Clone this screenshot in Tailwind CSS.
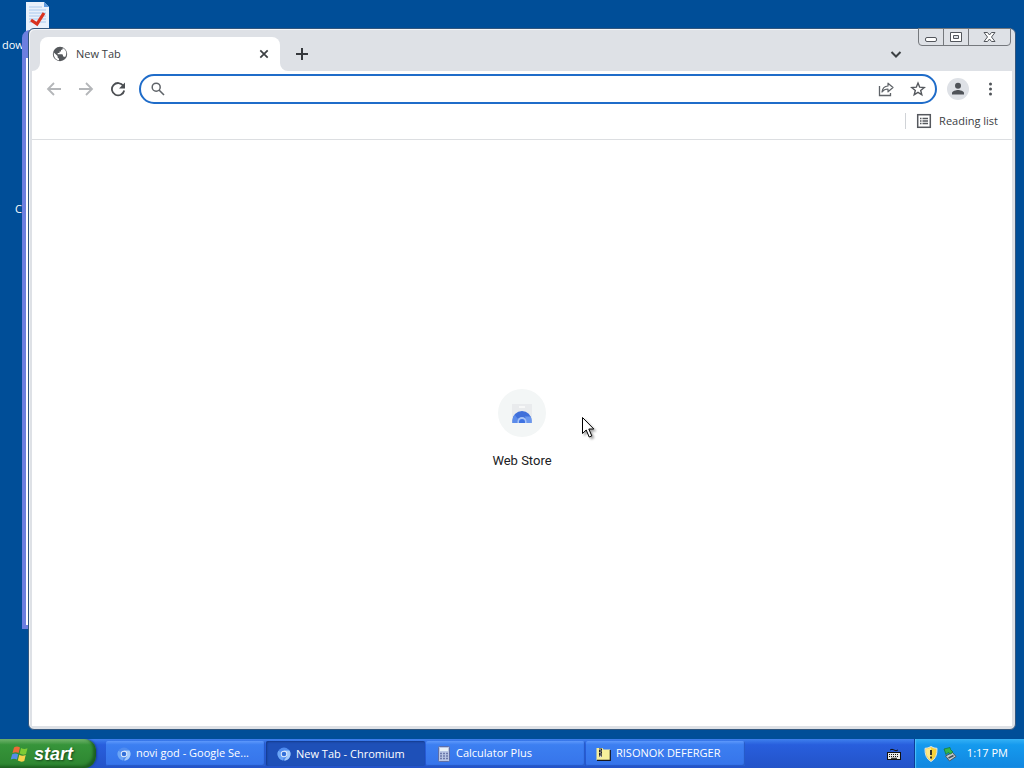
<!DOCTYPE html>
<html lang="en">
<head>
  <meta charset="UTF-8" />
  <meta name="viewport" content="width=device-width, initial-scale=1.0" />
  <title>New Tab - Chromium</title>
  <script src="https://cdn.jsdelivr.net/npm/@tailwindcss/browser@4"></script>
</head>
<body class="h-screen flex flex-col overflow-hidden bg-[#004e98] font-['Open_Sans',sans-serif] text-[11px] text-[#3c4043]">

  <!-- Desktop -->
  <main class="relative flex-1 overflow-hidden">
    <!-- Desktop icons -->
    <div class="absolute left-[2px] top-0 text-white">
      <svg class="ml-6 w-6 h-8" viewBox="0 0 24 32">
        <path d="M0 2h18l5 5v25H0z" fill="#e9f1fb" />
        <path d="M18 2v5h5z" fill="#5f9be0" />
        <path d="M3 7h13M3 10h17M3 13h17M3 16h17M3 19h17M3 22h17" stroke="#a9c9ee" />
        <path d="M5 20l6 4 7-11" fill="none" stroke="#d9321f" stroke-width="3.2" />
      </svg>
      <p class="mt-[5px] leading-4">downloads</p>
    </div>
    <p class="absolute left-[15px] top-[201px] leading-4 text-white">Chromium</p>

    <!-- Window behind -->
    <section class="absolute left-[22px] top-[30px] right-6 bottom-[110px] rounded-t-lg border-4 border-[#6c7fe0] bg-white">
      <div class="h-6 bg-[#6c7fe0]"></div>
    </section>

    <!-- Browser window -->
    <section class="absolute left-[28px] top-[28px] right-[8px] bottom-[9px] flex flex-col rounded-md border border-[#33567d] bg-[#dee1e6] shadow-[inset_1px_1px_0_#f4f5f7]">
      <!-- Tab strip -->
      <header class="relative h-[42px] pl-[11px] flex items-end">
        <div class="relative w-60 h-[34px] pl-3 pr-2 flex items-center rounded-t-lg bg-white">
          <svg class="w-4 h-4" viewBox="0 0 16 16">
            <circle cx="8" cy="8" r="7.2" fill="#55585c" />
            <path d="M1.8 6.4l3.8 3.7v1.3l1.4 1.3v1.5C3.6 13.7 1.5 11 1.8 6.4z" fill="#fff" />
            <path d="M10.6 2c.5 1.3-.3 2-1.6 2v1.5H7.5V7H5.7v1.300H10c.8 0 1 .7 1 2.200h.9c.5 0 .9.300 1.100.8C15.300 8 14.500 3.800 10.600 2z" fill="#fff" />
          </svg>
          <span class="ml-2 flex-1">New Tab</span>
          <button aria-label="Close tab" class="w-4 h-4 flex items-center justify-center">
            <svg class="w-4 h-4" viewBox="0 0 16 16"><path d="M4.300 4.300l7.400 7.400M11.700 4.300l-7.400 7.400" stroke="#3c4043" stroke-width="1.700" /></svg>
          </button>
          <svg class="absolute -left-2 bottom-0 w-2 h-2" viewBox="0 0 8 8"><path d="M8 0v8H0a8 8 0 0 0 8-8z" fill="#fff" /></svg>
          <svg class="absolute -right-2 bottom-0 w-2 h-2" viewBox="0 0 8 8"><path d="M0 0v8h8a8 8 0 0 1-8-8z" fill="#fff" /></svg>
        </div>
        <button aria-label="New tab" class="ml-3 mb-2 w-5 h-[18px]">
          <svg class="w-5 h-[18px]" viewBox="0 0 20 18"><path d="M10 3v12M4 9h12" stroke="#35383c" stroke-width="2" /></svg>
        </button>
        <button aria-label="Search tabs" class="ml-auto mr-[111px] mb-2 w-4 h-[18px]">
          <svg class="w-4 h-[18px]" viewBox="0 0 16 18"><path d="M3.500 7l4.500 4.500L12.500 7" fill="none" stroke="#3c4043" stroke-width="2" /></svg>
        </button>
        <!-- Caption buttons -->
        <div class="absolute right-1 -top-px h-[18px] flex divide-x divide-[#75787d] rounded-b border border-[#75787d] bg-[#dee1e6]">
          <button aria-label="Minimize" class="w-[25px]">
            <svg class="w-6 h-4" viewBox="0 0 24 16"><rect x="6.500" y="8.500" width="11" height="4" rx="1.500" fill="#fff" stroke="#53565c" /></svg>
          </button>
          <button aria-label="Maximize" class="w-[25px]">
            <svg class="w-6 h-4" viewBox="0 0 24 16"><path d="M6.500 3.500h11v9h-11zM9.500 6.500h5v3h-5z" fill="#fff" fill-rule="evenodd" stroke="#53565c" /></svg>
          </button>
          <button aria-label="Close" class="w-[41px]">
            <svg class="w-10 h-4" viewBox="0 0 40 16"><path d="M15 3.500h3.500L20.500 6l2-2.500H26L22.500 8l3.500 4.500h-3.500l-2-2.500-2 2.500H15L18.500 8z" fill="#fff" stroke="#53565c" /></svg>
          </button>
        </div>
      </header>

      <div class="flex-1 mx-[3px] mb-[3px] flex flex-col bg-white">
        <!-- Toolbar -->
        <div class="h-9 pl-[14px] pr-[14px] flex items-center">
          <button aria-label="Back" class="w-4 h-4">
            <svg class="w-4 h-4" viewBox="0 0 16 16"><path d="M15 8H2.500M8 2L2 8l6 6" fill="none" stroke="#b4b6b9" stroke-width="1.800" /></svg>
          </button>
          <button aria-label="Forward" class="ml-4 w-4 h-4">
            <svg class="w-4 h-4" viewBox="0 0 16 16"><path d="M1 8h12.500M8 2l6 6-6 6" fill="none" stroke="#b4b6b9" stroke-width="1.800" /></svg>
          </button>
          <button aria-label="Reload" class="ml-4 w-4 h-4">
            <svg class="w-4 h-4" viewBox="0 0 16 16">
              <path d="M13.300 4.800A6.200 6.200 0 1 0 14.200 9.500" fill="none" stroke="#4b4e52" stroke-width="1.800" />
              <path d="M15 1.500v6H9z" fill="#4b4e52" />
            </svg>
          </button>
          <form class="ml-[13px] h-[30px] flex-1 px-[9px] flex items-center rounded-full border-2 border-[#1f6cc9]">
            <svg class="w-4 h-4" viewBox="0 0 16 16"><circle cx="6.200" cy="6.200" r="4" fill="none" stroke="#5f6368" stroke-width="1.500" /><path d="M9 9l5 5" stroke="#5f6368" stroke-width="1.600" /></svg>
            <input type="text" aria-label="Address and search bar" class="ml-2 flex-1 h-6 outline-none" />
            <button type="button" aria-label="Share" class="w-4 h-4">
              <svg class="w-4 h-4" viewBox="0 0 16 16">
                <path d="M1.500 5v9.500h11V12" fill="none" stroke="#5f6368" stroke-width="1.300" />
                <path d="M4 11c.500-4 2.500-5.800 6-6V2.200L15 6.500l-5 4.300V8c-2.600 0-4.400.700-6 3z" fill="none" stroke="#5f6368" stroke-width="1.200" stroke-linejoin="round" />
              </svg>
            </button>
            <button type="button" aria-label="Bookmark this tab" class="ml-4 w-4 h-4">
              <svg class="w-4 h-4" viewBox="0 0 16 16"><path d="M8 2l1.700 4.200 4.500.300-3.500 2.900 1.100 4.400L8 11.400l-3.800 2.400 1.100-4.400L1.800 6.500l4.500-.300z" fill="none" stroke="#55585d" stroke-width="1.400" /></svg>
            </button>
          </form>
          <button aria-label="Profile" class="ml-2.5 w-[22px] h-[22px]">
            <svg class="w-[22px] h-[22px]" viewBox="0 0 22 22"><circle cx="11" cy="11" r="11" fill="#dee1e6" /><circle cx="11" cy="7.800" r="3" fill="#4f5358" /><path d="M5 16.500v-1.500c0-2 4-3 6-3s6 1 6 3v1.500z" fill="#4f5358" /></svg>
          </button>
          <button aria-label="Menu" class="ml-[13px] w-4 h-4">
            <svg class="w-4 h-4" viewBox="0 0 16 16" fill="#4f5358"><circle cx="8.500" cy="3" r="1.500" /><circle cx="8.500" cy="8" r="1.500" /><circle cx="8.500" cy="13" r="1.500" /></svg>
          </button>
        </div>

        <!-- Bookmarks bar -->
        <div class="h-[33px] pb-1 pr-[14px] flex items-center justify-end border-b border-[#dcdee1]">
          <span class="mr-[10px] w-px h-4 bg-[#d0d3d7]"></span>
          <button class="flex items-center gap-[7px]">
            <svg class="w-4 h-4" viewBox="0 0 16 16" fill="none" stroke="#55585d"><rect x="1.700" y="1.700" width="12.600" height="12.600" stroke-width="1.500" /><path d="M4 5.500h1.500M4 8h1.500M4 10.500h1.500M6.500 5.500H12M6.500 8H12M6.500 10.500H12" stroke-width="1.300" /></svg>
            <span>Reading list</span>
          </button>
        </div>

        <!-- New tab page -->
        <div class="flex-1 flex items-center justify-center">
          <a href="#" class="pb-[7px] flex flex-col items-center">
            <span class="w-12 h-12 flex items-center justify-center rounded-full bg-[#f3f6f6]">
              <svg class="w-6 h-6" viewBox="0 0 24 24">
                <path d="M2 3h20v19H2z" fill="#e9ebed" />
                <path d="M9 5h6v2H9z" fill="#f7f8f8" />
                <path d="M2.500 22v-2.500a9.500 9.500 0 0 1 19 0V22z" fill="#3f6fda" />
                <path d="M2.500 22v-2.500c0-2 1-4.500 2-6L8 18v4z" fill="#5b8bea" />
                <path d="M14.500 22c2-2 2-5 0-6.500h6c1.500 2 1 4.500 1 6.500z" fill="#6a97ee" />
                <path d="M7.500 22v-1.500a4.500 4.500 0 0 1 9 0V22z" fill="#a6c3f6" />
                <path d="M9 22v-1a3 3 0 0 1 6 0v1z" fill="#3f73e2" />
              </svg>
            </span>
            <span class="mt-[14px] leading-5 font-[Roboto,sans-serif] text-[13px] text-[#202124]">Web Store</span>
          </a>
        </div>
      </div>
    </section>

    <!-- Mouse pointer -->
    <svg class="absolute left-[581px] top-[416px] w-4 h-6 drop-shadow-[2px_2px_1px_rgba(0,0,0,0.35)]" viewBox="0 0 16 24">
      <path d="M1.500 1.500v16l3.700-3.500 3 7 2.600-1.100-3-6.900h5z" fill="#fff" stroke="#000" />
    </svg>
  </main>

  <!-- Taskbar -->
  <footer class="h-[29px] flex text-white bg-linear-to-b from-[#3f80ee] via-[#285edd] via-20% to-[#2353c8]">
    <button class="w-24 pl-2.5 flex items-center gap-1 rounded-r-xl bg-linear-to-b from-[#6fb46c] via-[#36943a] via-20% to-[#2d8530] shadow-[inset_-3px_-2px_3px_#1c5e20,1px_0_2px_#173e94]">
      <svg class="w-5 h-5" viewBox="0 0 20 20">
        <path d="M4 3.500q3-2 6 0L8.600 9Q6 7.500 2.500 9z" fill="#ee6a38" />
        <path d="M11 4q3 2 6.500.300L16 10q-3 1.500-6.300-.500z" fill="#7fcb35" />
        <path d="M2.200 10.300q3-1.700 6 0L7 15.500q-3-1.700-6.300 0z" fill="#558de8" />
        <path d="M9.300 10.800q3 1.800 6.400.300L14.300 17q-3 1.500-6.500-.500z" fill="#f8d24b" />
      </svg>
      <span class="font-['Liberation_Sans',sans-serif] text-[18px] leading-5 font-bold italic [text-shadow:1px_1px_2px_#17451a]">start</span>
    </button>

    <nav class="ml-2.5 py-[2px] flex-1 flex gap-px">
      <button class="w-[159px] pl-2.5 flex items-center gap-1 rounded-xs bg-linear-to-b from-[#5d98fb] via-[#3c7ff1] via-15% to-[#3674ea] shadow-[inset_-1px_-1px_1px_#2558c5]">
        <svg class="w-4 h-4" viewBox="0 0 16 16"><circle cx="8" cy="8" r="6.500" fill="#4f8cf0" /><path d="M8 8L2.400 4.700A6.500 6.500 0 0 0 7 14.400z" fill="#6ba5f5" /><path d="M8 4.500h5.500A6.500 6.500 0 0 1 8 14.500L11 10z" fill="#a4cbfb" /><circle cx="8" cy="8" r="3.200" fill="#e4effd" /><circle cx="8" cy="8" r="2.300" fill="#326fd9" /></svg>
        <span>novi god - Google Se...</span>
      </button>
      <button class="w-[159px] pl-2.5 pt-px flex items-center gap-1 rounded-xs bg-[#1e50b8] shadow-[inset_1px_1px_2px_#143a8c]">
        <svg class="w-4 h-4" viewBox="0 0 16 16"><circle cx="8" cy="8" r="6.500" fill="#4f8cf0" /><path d="M8 8L2.400 4.700A6.500 6.500 0 0 0 7 14.400z" fill="#6ba5f5" /><path d="M8 4.500h5.500A6.500 6.500 0 0 1 8 14.500L11 10z" fill="#a4cbfb" /><circle cx="8" cy="8" r="3.200" fill="#e4effd" /><circle cx="8" cy="8" r="2.300" fill="#326fd9" /></svg>
        <span>New Tab - Chromium</span>
      </button>
      <button class="w-[159px] pl-2.5 flex items-center gap-1 rounded-xs bg-linear-to-b from-[#5d98fb] via-[#3c7ff1] via-15% to-[#3674ea] shadow-[inset_-1px_-1px_1px_#2558c5]">
        <svg class="w-4 h-4" viewBox="0 0 16 16"><rect x="2.500" y=".5" width="11" height="15" rx="1" fill="#b9c6e4" stroke="#5d6ea8" /><path d="M4 2h8v3H4z" fill="#e8f1f8" /><path d="M4 7.500h8M4 10h8M4 12.500h8" stroke="#6c79ab" stroke-width="1.500" stroke-dasharray="2 1" /></svg>
        <span>Calculator Plus</span>
      </button>
      <button class="w-[159px] pl-2.5 flex items-center gap-1 rounded-xs bg-linear-to-b from-[#5d98fb] via-[#3c7ff1] via-15% to-[#3674ea] shadow-[inset_-1px_-1px_1px_#2558c5]">
        <svg class="w-4 h-4" viewBox="0 0 16 16"><path d="M.5 2h6l1 1.500h6.500v10.500H.500z" fill="#f7ef9b" /><path d="M1 14.300h13.300V4" fill="none" stroke="#17171c" stroke-width="1.200" /><path d="M3 2.500h3v8.500H3z" fill="#222" /><path d="M3.500 3.500h1M4.500 5h1M3.500 6.500h1M4.500 8h1" stroke="#fff" /><path d="M3.500 9.500h2v2h-2z" fill="#ddd" /></svg>
        <span>RISONOK DEFERGER</span>
      </button>
    </nav>

    <button aria-label="Keyboard" class="mr-3 w-4">
      <svg class="w-4 h-4" viewBox="0 0 16 16"><path d="M4 4q2-1.500 4 0t4 0" fill="none" stroke="#111" /><rect x="1.500" y="6.500" width="13" height="7" fill="#e8e8e8" stroke="#111" /><path d="M3 8.500h10M3 10.500h10" stroke="#111" stroke-dasharray="1 1" /><path d="M5 12.300h6" stroke="#111" /></svg>
    </button>
    <!-- Tray -->
    <div class="w-[110px] pl-2 pr-4 flex items-center border-l border-[#0c3c97] bg-linear-to-b from-[#33b1f5] via-[#159aee] via-20% to-[#1287e0] shadow-[inset_1px_0_1px_#4fc3fa]">
      <svg class="w-4 h-4" viewBox="0 0 16 16"><path d="M8 .5q3 2 6 1.800Q14.500 12 8 15.500 1.500 12 2 2.300 5 2.500 8 .5z" fill="#f7d23a" stroke="#dfe5ea" /><path d="M8 1.500v13Q2.800 11 3 3.300 6 3 8 1.500z" fill="#fbe88a" /><path d="M8 4v5M8 10.500v2" stroke="#222" stroke-width="1.800" /></svg>
      <svg class="ml-[3px] w-4 h-4" viewBox="0 0 16 16"><path d="M3.500 10l7-3.500 3.500 4-6.500 4.500z" fill="#c3ccd0" stroke="#4b5860" /><path d="M6.500 12l5-2.500" stroke="#424c52" stroke-width="1.500" /><path d="M2 3l6-1.500.5 2L11 6 8.500 8 6 6.500 4 8.500z" fill="#35b64c" stroke="#157431" stroke-width=".7" /></svg>
      <span class="ml-auto whitespace-nowrap">1:17 PM</span>
    </div>
  </footer>
</body>
</html>
